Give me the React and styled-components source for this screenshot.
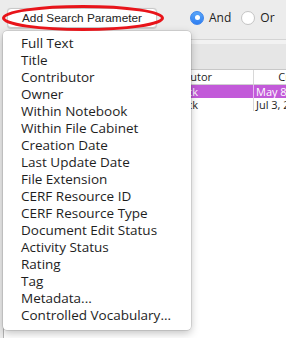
import React from 'react';
import styled, { createGlobalStyle } from 'styled-components';

const GlobalStyle = createGlobalStyle`
    html, body {
        margin: 0;
        padding: 0;
        background: #ececec;
    }
    body {
        font-family: "Open Sans", "DejaVu Sans", sans-serif;
        color: #1e1e1e;
    }
`;

const Window = styled.div`
    position: relative;
    width: 286px;
    height: 338px;
    overflow: hidden;
    display: flex;
    flex-direction: column;
    background: #ececec;
`;

const Toolbar = styled.div`
    height: 39px;
    flex: none;
    display: flex;
    align-items: center;
    padding-left: 7px;
    box-sizing: border-box;
`;

const AddButton = styled.div`
    width: 150px;
    height: 20px;
    margin-top: -3px;
    box-sizing: border-box;
    background: #fff;
    border: 1px solid #c9c9c9;
    border-radius: 4px;
    box-shadow: 0 0.5px 1px rgba(0, 0, 0, 0.15);
    font-family: "Liberation Sans", Arial, sans-serif;
    font-size: 11.8px;
    line-height: 18px;
    text-align: center;
    color: #222;
`;

const RadioGroup = styled.div`
    display: flex;
    align-items: center;
    margin-left: 33px;
    margin-top: -4px;
    gap: 10px;
`;

const RadioLabel = styled.label`
    display: flex;
    align-items: center;
    gap: 5px;
    font-size: 12px;
    color: #222;
`;

const RadioDot = styled.span`
    width: 14px;
    height: 14px;
    box-sizing: border-box;
    border-radius: 50%;
    display: flex;
    align-items: center;
    justify-content: center;
    background: ${p => (p.$on ? 'linear-gradient(#5aa6f8, #2f7ff2)' : '#fff')};
    border: 1px solid ${p => (p.$on ? '#3b84ec' : '#c4c4c4')};
    &::after {
        content: '';
        width: 5px;
        height: 5px;
        border-radius: 50%;
        background: #fff;
        display: ${p => (p.$on ? 'block' : 'none')};
    }
`;

const Panel = styled.div`
    flex: 1;
    margin-left: 3px;
    border-left: 1px solid #b5b5b5;
    border-top: 1px solid #d4d4d4;
    background: #fff;
    display: flex;
    flex-direction: column;
`;

const Strip = styled.div`
    height: 30px;
    flex: none;
    background: #e6e6e6;
    border-top: 4px solid #f2f2f2;
    border-bottom: 1px solid #c8c8c8;
    box-sizing: border-box;
`;

const Row = styled.div`
    display: grid;
    grid-template-columns: 145px 104px 90px;
    height: ${p => (p.$head ? '14px' : '13px')};
    font-size: 11px;
    line-height: ${p => (p.$head ? '14px' : '13px')};
    background: ${p => (p.$selected ? '#c25ad9' : '#fff')};
    color: ${p => (p.$selected ? '#fff' : '#1e1e1e')};
    border-bottom: ${p => (p.$head ? '1px solid #d0d0d0' : 'none')};
    white-space: nowrap;
`;

const Cell = styled.div`
    overflow: hidden;
    padding-left: ${p => (p.$center ? '0' : p.$sep ? '2px' : '4px')};
    text-align: ${p => (p.$center ? 'center' : 'left')};
    border-left: ${p => (p.$sep ? `1px solid ${p.$selected ? '#e6b8ef' : '#d8d8d8'}` : 'none')};
`;

const Menu = styled.ul`
    position: absolute;
    top: 31px;
    left: 3px;
    width: 188px;
    margin: 0;
    padding: 4px 0 6px;
    list-style: none;
    background: #fff;
    border-radius: 4px;
    box-shadow: 0 0 0 0.5px rgba(0, 0, 0, 0.18), 0 3px 8px rgba(0, 0, 0, 0.25);
`;

const MenuItem = styled.li`
    height: 17px;
    line-height: 17px;
    padding-left: 18px;
    font-size: 13.5px;
    color: #1e1e1e;
    white-space: nowrap;
`;

const Highlight = styled.svg`
    position: absolute;
    left: 1px;
    top: 4px;
    pointer-events: none;
`;

const items = [
    'Full Text',
    'Title',
    'Contributor',
    'Owner',
    'Within Notebook',
    'Within File Cabinet',
    'Creation Date',
    'Last Update Date',
    'File Extension',
    'CERF Resource ID',
    'CERF Resource Type',
    'Document Edit Status',
    'Activity Status',
    'Rating',
    'Tag',
    'Metadata...',
    'Controlled Vocabulary...'
];

const rows = [
    { name: 'Lab Notebook', contributor: 'Hendrick', created: 'May 8, 2014', selected: true },
    { name: 'Protocols', contributor: 'Hendrick', created: 'Jul 3, 2014' }
];

export default function App() {
    return (
        <Window>
            <GlobalStyle />
            <Toolbar>
                <AddButton>Add Search Parameter</AddButton>
                <RadioGroup>
                    <RadioLabel><RadioDot $on />And</RadioLabel>
                    <RadioLabel><RadioDot />Or</RadioLabel>
                </RadioGroup>
            </Toolbar>
            <Panel>
                <Strip />
                <Row $head>
                    <Cell>Name</Cell>
                    <Cell $sep>Contributor</Cell>
                    <Cell $sep $center>Created</Cell>
                </Row>
                {rows.map(r => (
                    <Row key={r.name} $selected={r.selected}>
                        <Cell>{r.name}</Cell>
                        <Cell $sep $selected={r.selected}>{r.contributor}</Cell>
                        <Cell $sep $selected={r.selected}>{r.created}</Cell>
                    </Row>
                ))}
            </Panel>
            <Menu>
                {items.map(i => <MenuItem key={i}>{i}</MenuItem>)}
            </Menu>
            {/* red annotation ring round the button */}
            <Highlight width="164" height="30" viewBox="0 0 164 30">
                <ellipse cx="82" cy="14" rx="79.5" ry="11.5" fill="none" stroke="#e8141a" strokeWidth="3" />
            </Highlight>
        </Window>
    );
}
